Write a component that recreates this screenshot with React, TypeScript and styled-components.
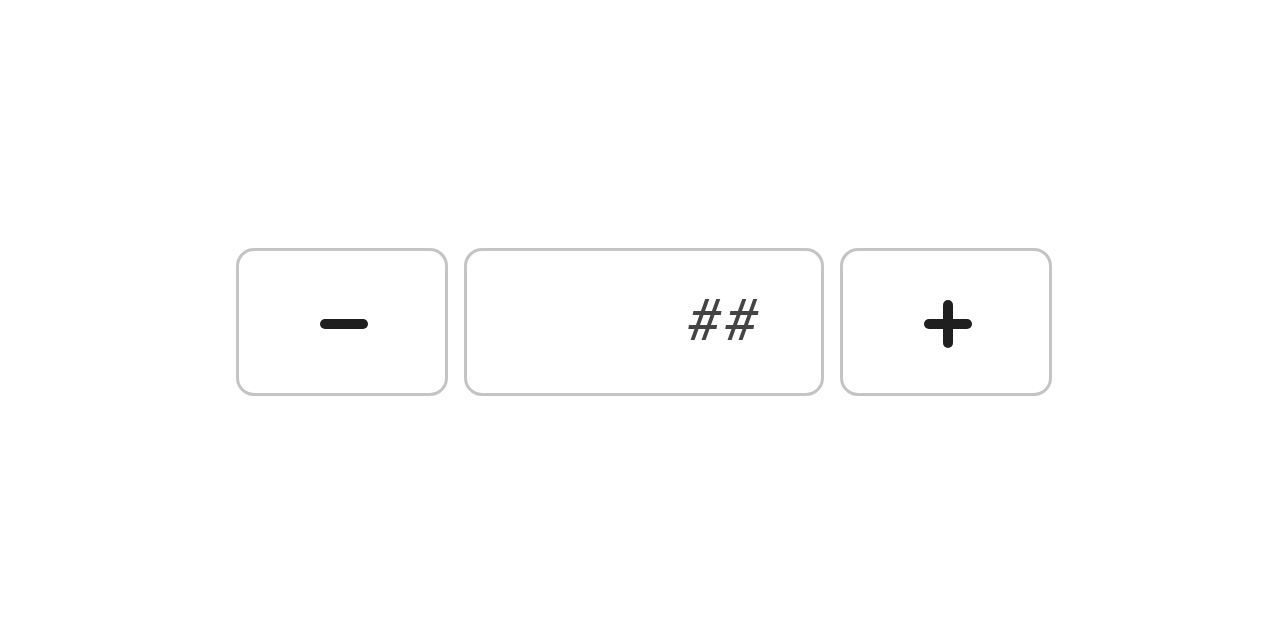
import React from "react";
import styled, { createGlobalStyle } from "styled-components";

const Global = createGlobalStyle`
  html, body { margin: 0; padding: 0; background: #fff; }
  body { font-family: Roboto, sans-serif; }
`;

const Page = styled.div`
  width: 1288px;
  height: 644px;
  display: flex;
  align-items: center;
  justify-content: center;
`;

const Stepper = styled.div`
  display: flex;
  gap: 16px;
`;

const StepButton = styled.button`
  width: 212px;
  height: 148px;
  box-sizing: border-box;
  border: 3px solid #c4c4c4;
  border-radius: 18px;
  background: #fff;
  display: flex;
  align-items: center;
  justify-content: center;
  padding: 4px 0 0 4px;
  margin: 0;
  cursor: pointer;
`;

const Field = styled.div`
  width: 360px;
  height: 148px;
  box-sizing: border-box;
  border: 3px solid #c4c4c4;
  border-radius: 18px;
  background: #fff;
  display: flex;
  align-items: center;
  justify-content: flex-end;
  padding: 0 61px 3px 0;
  font-family: Roboto, sans-serif;
  font-style: italic;
  font-size: 57px;
  letter-spacing: 3px;
  color: #444;
`;

const Icon = ({ plus }: { plus?: boolean }) => (
  <svg width="48" height="48" viewBox="0 0 48 48">
    <line x1="5" y1="24" x2="43" y2="24" stroke="#1f1f1f" strokeWidth="10" strokeLinecap="round" />
    {plus && <line x1="24" y1="5" x2="24" y2="43" stroke="#1f1f1f" strokeWidth="10" strokeLinecap="round" />}
  </svg>
);

export default function App() {
  return (
    <>
      <Global />
      <Page>
        <Stepper>
          <StepButton aria-label="decrease"><Icon /></StepButton>
          <Field>##</Field>
          <StepButton aria-label="increase"><Icon plus /></StepButton>
        </Stepper>
      </Page>
    </>
  );
}
